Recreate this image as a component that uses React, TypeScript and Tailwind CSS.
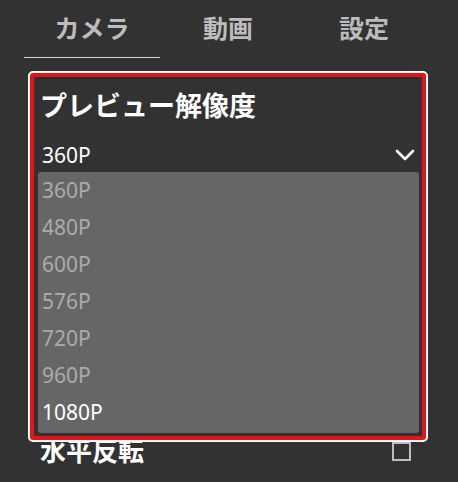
const tabs = ['カメラ', '動画', '設定'];
const resolutions = ['360P', '480P', '600P', '576P', '720P', '960P', '1080P'];

export default function App() {
  return (
    <div className="relative w-[458px] h-[482px] overflow-hidden bg-[#323232] font-['Noto_Sans','Noto_Sans_CJK_JP',sans-serif]">
      {/* Tabs */}
      <div className="ml-[24px] flex w-[408px] h-[58px]">
        {tabs.map((t, i) => (
          <div
            key={t}
            className={
              i === 0
                ? 'flex w-[136px] items-center justify-center border-b border-[#d4d4d4] text-[25px] font-bold text-[#bcbcbc]'
                : 'flex w-[136px] items-center justify-center text-[25px] font-bold text-[#bcbcbc]'
            }
          >
            {t}
          </div>
        ))}
      </div>

      {/* Settings card */}
      <div className="ml-[36px] mt-[20px] w-[383px] border-t border-[#262626] pl-[4px] pr-[3px] pt-[12px]">
        <div className="text-[27px] font-bold leading-[30px] text-white">プレビュー解像度</div>
        <div className="mt-[19px] flex h-[30px] items-center justify-between pl-[2px]">
          <span className="text-[21px] leading-[30px] text-white">360P</span>
          <svg width="20" height="12" viewBox="0 0 20 12" className="mr-[1px]">
            <polyline points="2,2 10,10 18,2" fill="none" stroke="#fff" strokeWidth="2.6" strokeLinecap="round" strokeLinejoin="round" />
          </svg>
        </div>
        <div className="mt-[261px] flex h-[40px] items-center justify-between">
          <span className="text-[26px] font-bold leading-[40px] text-white">水平反転</span>
          <div className="mr-[5px] h-[19px] w-[19px] border-2 border-[#bdbdbd]" />
        </div>
      </div>

      {/* Open dropdown list */}
      <div className="absolute left-[38px] top-[172px] w-[381px] h-[261px] rounded-[3px] bg-[#666666]">
        {resolutions.map((r, i) => (
          <div
            key={r}
            className={
              i === resolutions.length - 1
                ? 'h-[37px] pl-[4px] text-[21px] leading-[37px] text-white'
                : 'h-[37px] pl-[4px] text-[21px] leading-[37px] text-[#ababab]'
            }
          >
            {r}
          </div>
        ))}
      </div>

      {/* Highlight annotation */}
      <div className="pointer-events-none absolute left-[30px] top-[73px] w-[396px] h-[367px] rounded-[3px] border-4 border-[#e3151a] outline-2 outline-white" />
    </div>
  );
}
